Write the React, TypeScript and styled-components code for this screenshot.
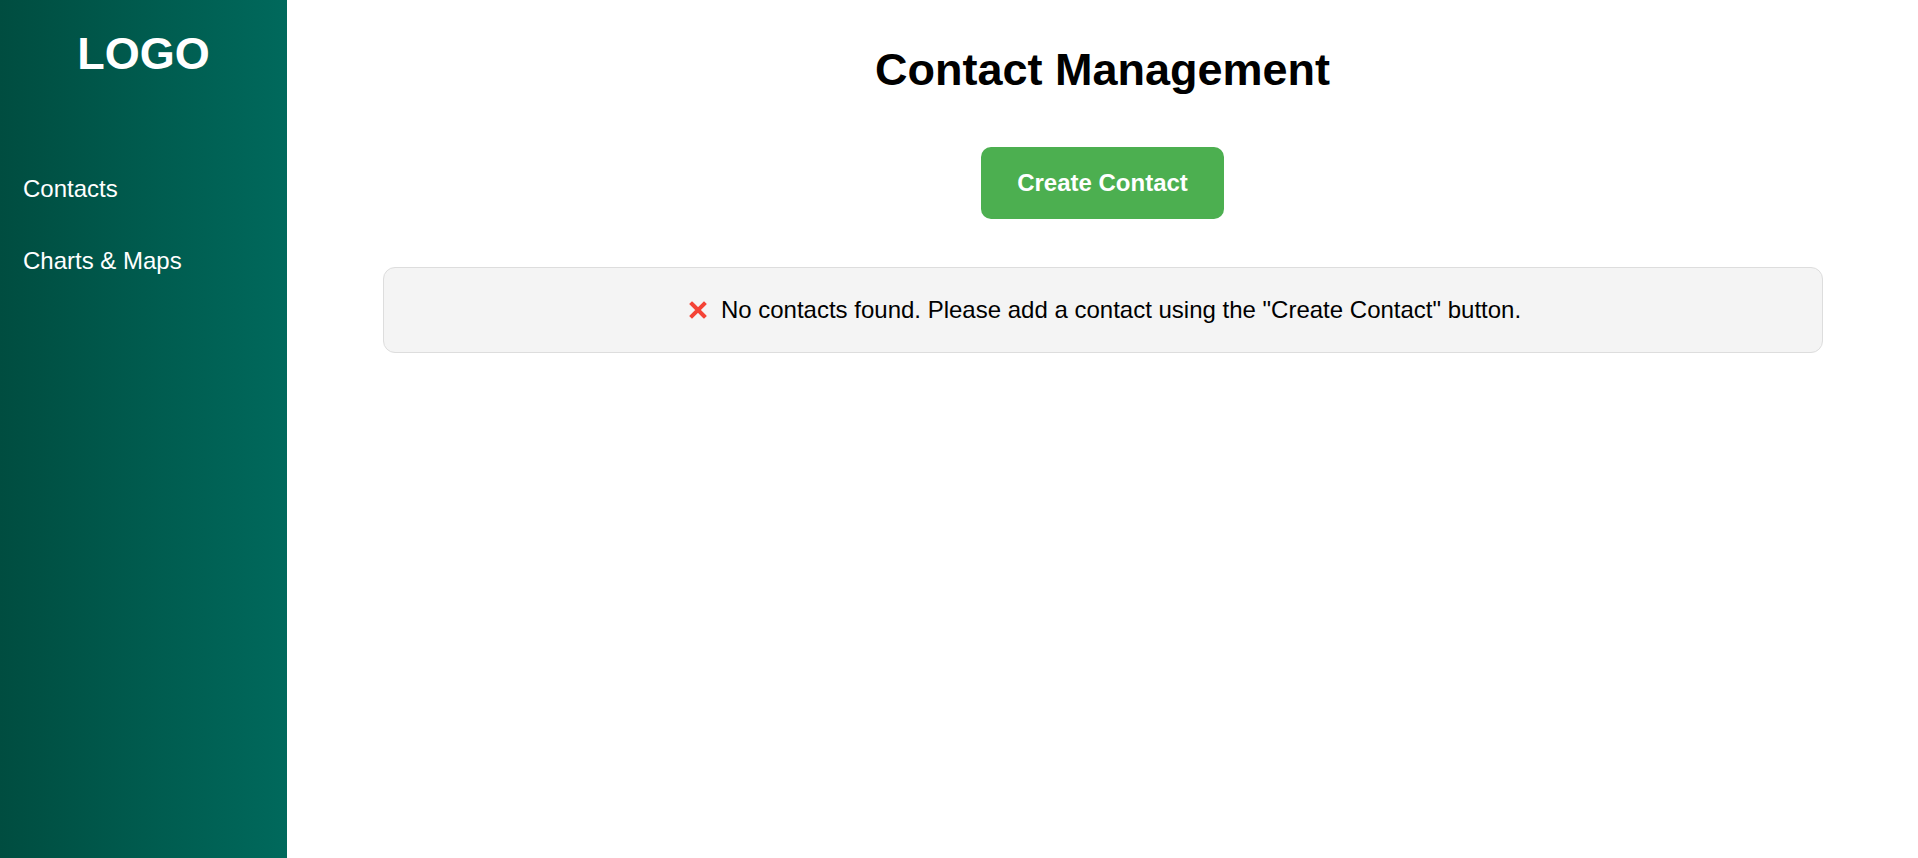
import React from "react";
import styled, { createGlobalStyle } from "styled-components";

const GlobalStyle = createGlobalStyle`
  html, body {
    margin: 0;
    padding: 0;
  }
  body {
    font-family: "Liberation Sans", Arial, sans-serif;
    background: #fff;
    color: #000;
  }
  * { box-sizing: border-box; }
`;

const navItems = ["Contacts", "Charts & Maps"];

function CrossIcon() {
  return (
    <svg width="18" height="18" viewBox="0 0 18 18" aria-hidden="true">
      <path
        d="M3 3 L15 15 M15 3 L3 15"
        stroke="#f44336"
        strokeWidth="4"
        strokeLinecap="square"
      />
    </svg>
  );
}

export default function App() {
  return (
    <>
      <GlobalStyle />
      <Layout>
        <Sidebar>
          <Logo>LOGO</Logo>
          <Nav>
            {navItems.map((item) => (
              <NavLink key={item} href="#">
                {item}
              </NavLink>
            ))}
          </Nav>
        </Sidebar>
        <Main>
          <Title>Contact Management</Title>
          <CreateButton type="button">Create Contact</CreateButton>
          <EmptyBox>
            <CrossIcon />
            <span>
              No contacts found. Please add a contact using the "Create Contact"
              button.
            </span>
          </EmptyBox>
        </Main>
      </Layout>
    </>
  );
}

/* ---- styles ---- */
const Layout = styled.div`
  display: flex;
  height: 100vh;
  overflow: hidden;
`;

const Sidebar = styled.aside`
  width: 287px;
  flex-shrink: 0;
  background: linear-gradient(to right, #004d40, #00695c);
  color: #fff;
  display: flex;
  flex-direction: column;
  padding-top: 28px;
`;

const Logo = styled.div`
  font-size: 45px;
  font-weight: 700;
  text-align: center;
  margin-bottom: 73px;
`;

const Nav = styled.nav`
  display: flex;
  flex-direction: column;
`;

const NavLink = styled.a`
  color: #fff;
  text-decoration: none;
  font-size: 24px;
  padding: 22px 23px;
`;

const Main = styled.main`
  flex: 1;
  display: flex;
  flex-direction: column;
  align-items: center;
  padding: 44px 95px;
`;

const Title = styled.h1`
  margin: 0;
  font-size: 45px;
  font-weight: 700;
`;

const CreateButton = styled.button`
  margin-top: 51px;
  background: #4caf50;
  color: #fff;
  border: none;
  border-radius: 10px;
  font-family: inherit;
  font-size: 24px;
  font-weight: 700;
  padding: 22px 36px;
  cursor: pointer;
`;

const EmptyBox = styled.div`
  margin-top: 48px;
  width: 100%;
  max-width: 1440px;
  display: flex;
  align-items: center;
  justify-content: center;
  gap: 14px;
  padding: 28px 20px 28px 25px;
  background: #f4f4f4;
  border: 1px solid #ddd;
  border-radius: 12px;
  font-size: 24px;
  color: #000;
`;
